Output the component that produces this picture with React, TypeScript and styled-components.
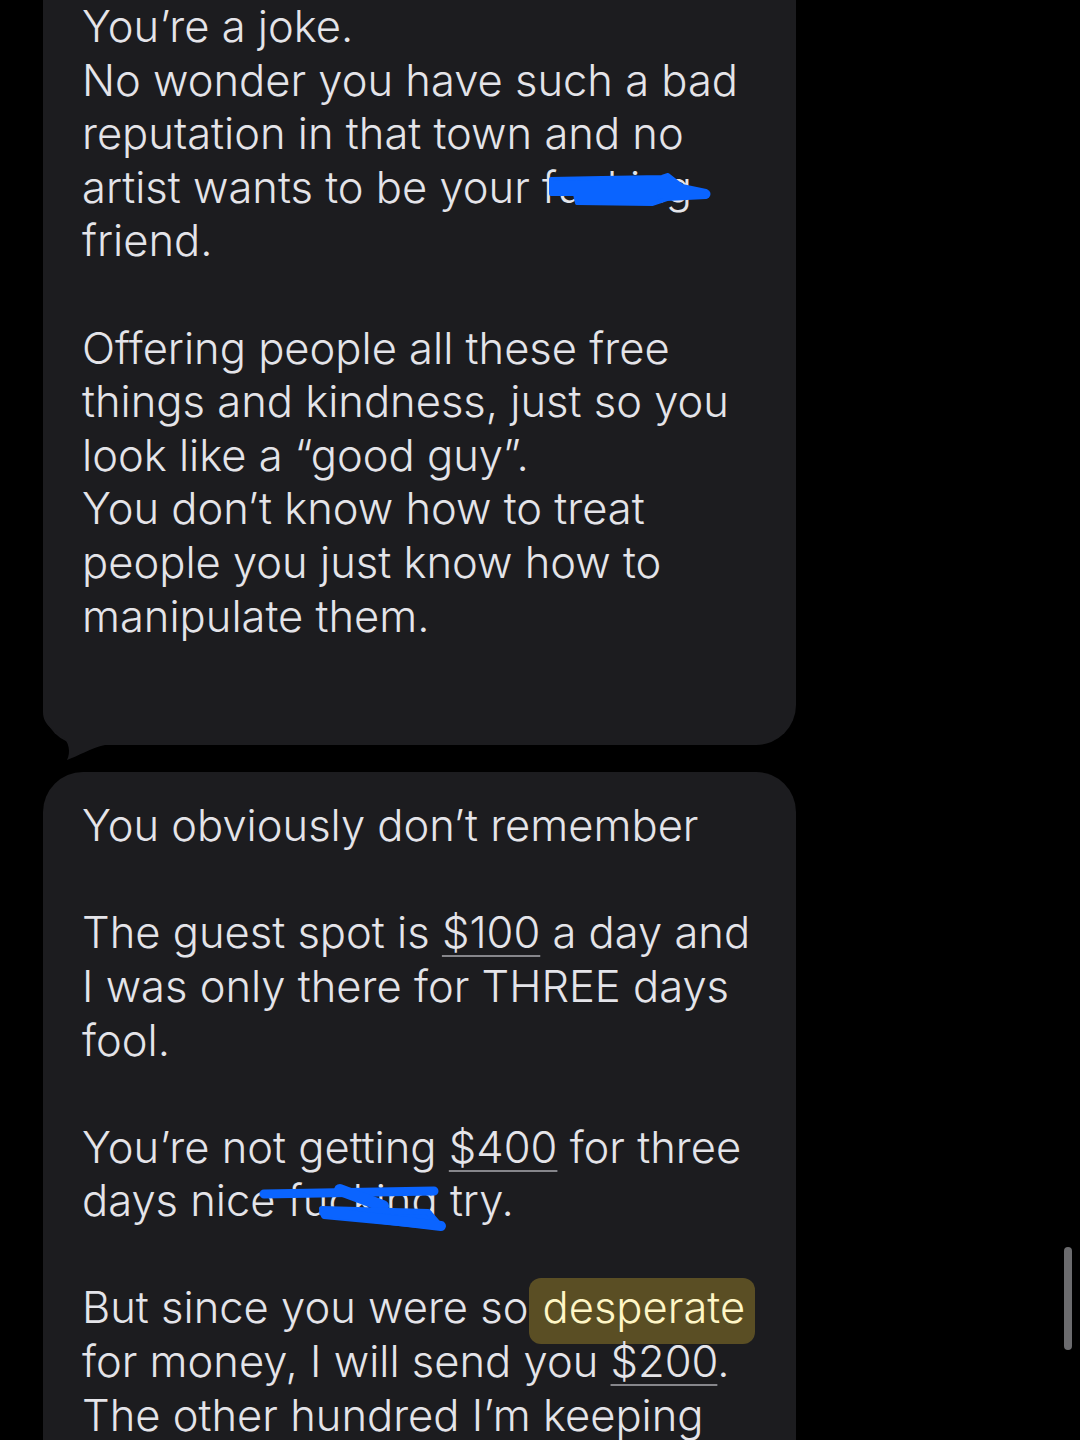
import styled, { createGlobalStyle } from "styled-components";

const GlobalStyle = createGlobalStyle`
  html, body {
    margin: 0;
    padding: 0;
    background: #000;
  }
`;

const Screen = styled.div`
  position: relative;
  width: 1080px;
  height: 1440px;
  overflow: hidden;
  background: #000;

  display: flex;
  flex-direction: column;
  gap: 27px;
  padding-left: 43px;
  box-sizing: border-box;

  font-family: "Inter", "Noto Sans", sans-serif;
  font-size: 43.5px;
  font-weight: 350;
  line-height: 53.6px;
  color: #e4e4e9;
`;

const Bubble = styled.div<{ $top?: boolean }>`
  position: relative;
  width: 753px;
  box-sizing: border-box;
  background: #1c1c1f;
  padding: ${(p) => (p.$top ? "0 20px 102px 39px" : "27px 20px 120px 39px")};
  border-radius: ${(p) => (p.$top ? "0 0 40px 40px" : "40px 40px 0 0")};
`;

const Line = styled.div`
  white-space: nowrap;
  min-height: 53.6px;
`;

const Money = styled.span`
  text-decoration: underline;
  text-decoration-color: #86868b;
  text-decoration-thickness: 2px;
  text-underline-offset: 7px;
`;

const Highlight = styled.span`
  background: #5a4e24;
  color: #fff6c6;
  border-radius: 12px;
  padding: 3px 10px 11px 14px;
`;

const Redacted = styled.span`
  position: relative;
`;

const Scribble = styled.svg`
  position: absolute;
  left: 0;
  top: 0;
  overflow: visible;
  pointer-events: none;
`;

const Tail = styled.svg`
  position: absolute;
  left: 0;
  bottom: -17px;
`;

const ScrollThumb = styled.div`
  position: absolute;
  right: 8px;
  top: 1247px;
  width: 8px;
  height: 103px;
  border-radius: 4px;
  background: #6b6b6e;
`;

const BLUE = "#0a64ff";

export default function App() {
  return (
    <>
      <GlobalStyle />
      <Screen>
        <Bubble $top>
          <Line>You’re a joke.</Line>
          <Line>No wonder you have such a bad</Line>
          <Line>reputation in that town and no</Line>
          <Line>
            artist wants to be your{" "}
            <Redacted>
              fucking
              <Scribble width="170" height="50" viewBox="0 0 170 50">
                <path
                  d="M9 18 L60 17 L120 16 L126 14 L140 25 L164 30 L164 36 L125 38 L110 43 L35 42 L33 33 L9 33 Z"
                  fill={BLUE}
                  stroke={BLUE}
                  strokeWidth="4"
                  strokeLinejoin="round"
                />
                <path
                  d="M120 33 L164 33"
                  stroke={BLUE}
                  strokeWidth="9"
                  strokeLinecap="round"
                />
              </Scribble>
            </Redacted>
          </Line>
          <Line>friend.</Line>
          <Line />
          <Line>Offering people all these free</Line>
          <Line>things and kindness, just so you</Line>
          <Line>look like a “good guy”.</Line>
          <Line>You don’t know how to treat</Line>
          <Line>people you just know how to</Line>
          <Line>manipulate them.</Line>
          <Tail width="62" height="62" viewBox="0 0 62 62">
            <path
              d="M0 0 L0 12 C0 26 12 30 19 36 C26 42 28 52 24 60 C35 56 48 48 62 45 L62 0 Z"
              fill="#1c1c1f"
            />
          </Tail>
        </Bubble>

        <Bubble>
          <Line>You obviously don’t remember</Line>
          <Line />
          <Line>
            The guest spot is <Money>$100</Money> a day and
          </Line>
          <Line>I was only there for THREE days</Line>
          <Line>fool.</Line>
          <Line />
          <Line>
            You’re not getting <Money>$400</Money> for three
          </Line>
          <Line>
            days nice{" "}
            <Redacted>
              fucking
              <Scribble width="180" height="60" viewBox="0 0 180 60">
                <path
                  d="M-24 20 L146 17"
                  stroke={BLUE}
                  strokeWidth="9"
                  strokeLinecap="round"
                />
                <path
                  d="M52 16 L95 32"
                  stroke={BLUE}
                  strokeWidth="12"
                  strokeLinecap="round"
                />
                <path
                  d="M34 35 L140 38 L153 53 L36 42 Z"
                  fill={BLUE}
                  stroke={BLUE}
                  strokeWidth="6"
                  strokeLinejoin="round"
                />
                <path
                  d="M36 38 L153 52"
                  stroke={BLUE}
                  strokeWidth="10"
                  strokeLinecap="round"
                />
              </Scribble>
            </Redacted>{" "}
            try.
          </Line>
          <Line />
          <Line>
            But since you were so<Highlight>desperate</Highlight>
          </Line>
          <Line>
            for money, I will send you <Money>$200</Money>.
          </Line>
          <Line>The other hundred I’m keeping</Line>
        </Bubble>
        <ScrollThumb />
      </Screen>
    </>
  );
}
